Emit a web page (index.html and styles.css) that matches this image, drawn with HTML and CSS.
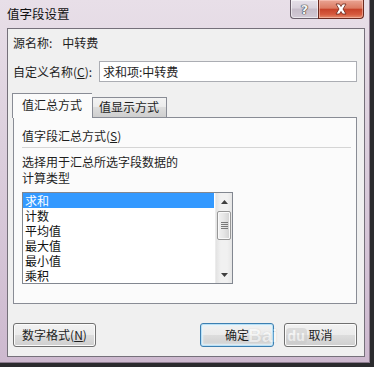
FILE: index.html
```html
<!DOCTYPE html>
<html lang="zh-CN">
<head>
<meta charset="utf-8">
<title>值字段设置</title>
<link rel="stylesheet" href="styles.css">
</head>
<body>
<div class="window">
  <div class="titlebar">
    <div class="title">值字段设置</div>
    <div class="caption">
      <div class="cap-btn help"><span class="help-glyph">?</span></div>
      <div class="cap-btn close">
        <svg width="16" height="12" viewBox="0 0 16 12"><path d="M3 1 L6.5 1 L8 3.5 L9.5 1 L13 1 L10 6 L13 11 L9.5 11 L8 8.5 L6.5 11 L3 11 L6 6 Z" fill="#fff" stroke="#6b2418" stroke-width="0.8"/></svg>
      </div>
    </div>
  </div>
  <div class="client">
    <div class="row row-source">
      <span class="lbl">源名称:</span><span class="val">中转费</span>
    </div>
    <div class="row row-custom">
      <span class="lbl">自定义名称(<u>C</u>):</span>
      <div class="input">求和项:中转费</div>
    </div>
    <div class="tabs">
      <div class="tab active">值汇总方式</div>
      <div class="tab second">值显示方式</div>
    </div>
    <div class="panel">
      <div class="group-title">值字段汇总方式(<u>S</u>)</div>
      <div class="sep"></div>
      <div class="desc">选择用于汇总所选字段数据的<br>计算类型</div>
      <div class="listbox">
        <div class="items">
          <div class="item selected">求和</div>
          <div class="item">计数</div>
          <div class="item">平均值</div>
          <div class="item">最大值</div>
          <div class="item">最小值</div>
          <div class="item">乘积</div>
        </div>
        <div class="scrollbar">
          <div class="arrow up"><svg width="7" height="4" viewBox="0 0 7 4"><path d="M0 4 L3.5 0 L7 4 Z" fill="#404040"/></svg></div>
          <div class="thumb"><span class="grip"></span></div>
          <div class="track"></div>
          <div class="arrow down"><svg width="7" height="4" viewBox="0 0 7 4"><path d="M0 0 L7 0 L3.5 4 Z" fill="#404040"/></svg></div>
        </div>
      </div>
    </div>
    <div class="buttons">
      <div class="btn fmt">数字格式(<u>N</u>)</div>
      <div class="spacer"></div>
      <div class="btn ok">确定</div>
      <div class="btn cancel">取消</div>
    </div>
    <div class="watermark">
      <span class="wm-bai">Bai</span><span class="wm-du">du</span>
    </div>
  </div>
</div>
</body>
</html>
```

FILE: styles.css
```css
* { box-sizing: border-box; }
html, body { margin: 0; padding: 0; }
body {
  width: 374px;
  height: 367px;
  background: #2b2b2e;
  font-family: "Noto Sans CJK SC", "Microsoft YaHei", sans-serif;
  font-size: 12px;
  color: #1e1e1e;
  overflow: hidden;
}
u { text-decoration: underline; text-underline-offset: 1px; }

.window {
  width: 370px;
  height: 363px;
  display: flex;
  flex-direction: column;
  background: linear-gradient(180deg, #e8dfe8 0%, #dccfdd 40%, #cdb9cf 100%);
  border-right: 1px solid #8c7b8e;
  border-bottom: 1px solid #8c7b8e;
}

.titlebar {
  height: 28px;
  display: flex;
  align-items: flex-start;
  padding-left: 7px;
}
.title {
  padding-top: 7px;
  line-height: 14px;
  font-size: 12.5px;
  color: #111;
}
.caption {
  margin-left: auto;
  margin-right: 5px;
  display: flex;
}
.cap-btn {
  height: 19px;
  display: flex;
  align-items: center;
  justify-content: center;
  border: 1px solid #6a5f6b;
  border-top: none;
}
.help {
  width: 28px;
  border-radius: 0 0 0 4px;
  border-right: none;
  background: linear-gradient(180deg, #e6e0e8 0%, #d9d2dc 45%, #c6bcc9 50%, #d2cad5 100%);
  box-shadow: inset 0 0 0 1px rgba(255,255,255,0.55);
}
.help-glyph {
  font-family: "DejaVu Sans", sans-serif;
  font-weight: bold;
  font-size: 13px;
  line-height: 13px;
  color: #f4f4f4;
  text-shadow: 0 0 1px #333, 0 0 1px #333, 0 0 1px #333;
}
.close {
  width: 46px;
  border-radius: 0 0 4px 0;
  border-color: #6b2a20;
  background: linear-gradient(180deg, #e9a493 0%, #dc7b63 45%, #c7432a 52%, #d65a3e 80%, #e48f6f 100%);
  box-shadow: inset 0 0 0 1px rgba(255,210,200,0.5);
}

.client {
  position: relative;
  flex: 1;
  margin: 0 4px 5px 7px;
  background: #f0f0f0;
  border: 1px solid #75707a;
  padding: 0 7px 0 5px;
  display: flex;
  flex-direction: column;
}

.row { display: flex; align-items: center; }
.row-source { margin-top: 6px; height: 16px; line-height: 16px; }
.row-source .val { margin-left: 10px; }
.row-custom { margin-top: 10px; height: 21px; }
.input {
  margin-left: auto;
  width: 258px;
  height: 21px;
  border: 1px solid #abadb3;
  background: #fff;
  line-height: 19px;
  padding-left: 3px;
}

.tabs {
  margin-top: 11px;
  height: 24px;
  display: flex;
  align-items: flex-end;
  margin-left: -1px;
}
.tab {
  height: 20px;
  line-height: 18px;
  white-space: nowrap;
  border: 1px solid #898c95;
  border-bottom: none;
  background: linear-gradient(180deg, #f3f3f3 0%, #ebebeb 50%, #dddddd 50%, #cfcfcf 100%);
}
.tab.active {
  height: 25px;
  width: 80px;
  background: #fbfbfb;
  line-height: 22px;
  padding-left: 9px;
  margin-bottom: -1px;
  position: relative;
  z-index: 1;
  border-right: none;
}
.tab.second { padding: 0 7px 0 6px; }

.panel {
  height: 187px;
  border: 1px solid #898c95;
  background: #fbfbfb;
  padding: 10px 5px 0 8px;
  display: flex;
  flex-direction: column;
}
.group-title { line-height: 16px; }
.sep {
  margin-top: 3px;
  height: 1px;
  background: #d5d5d5;
}
.desc { margin-top: 6px; line-height: 16px; }

.listbox {
  margin-top: 6px;
  width: 211px;
  height: 92px;
  border: 1px solid #828790;
  background: #fff;
  display: flex;
}
.items {
  flex: 1;
  overflow: hidden;
  padding: 0 1px 0 0;
}
.item {
  height: 15px;
  line-height: 15px;
  padding-left: 2px;
  font-size: 12px;
  color: #111;
}
.item.selected {
  background: #3399ff;
  color: #fff;
}
.scrollbar {
  width: 17px;
  display: flex;
  flex-direction: column;
  background: linear-gradient(90deg, #e3e3e3 0%, #f1f1f1 30%, #f1f1f1 70%, #e6e6e6 100%);
  border-left: 1px solid #ececec;
}
.arrow {
  height: 17px;
  display: flex;
  align-items: center;
  justify-content: center;
}
.thumb {
  height: 29px;
  margin: 1px 1px 0 1px;
  border: 1px solid #979797;
  border-radius: 2px;
  background: linear-gradient(90deg, #f2f2f2 0%, #e6e6e6 50%, #d2d2d2 100%);
  box-shadow: inset 0 0 0 1px #fafafa;
  display: flex;
  align-items: center;
  justify-content: center;
}
.grip {
  width: 7px;
  height: 8px;
  background: repeating-linear-gradient(180deg, #5e5e5e 0 1px, transparent 1px 2px);
  opacity: 0.8;
}
.track { flex: 1; }

.buttons {
  margin-top: 19px;
  height: 24px;
  display: flex;
}
.spacer { flex: 1; }
.btn {
  height: 24px;
  border: 1px solid #707070;
  border-radius: 3px;
  background: linear-gradient(180deg, #f2f2f2 0%, #ebebeb 49%, #dddddd 50%, #cfcfcf 100%);
  box-shadow: inset 0 0 0 1px #fbfbfb;
  display: flex;
  align-items: center;
  justify-content: center;
  line-height: 16px;
}
.btn.fmt { width: 83px; }
.btn.ok {
  width: 74px;
  border-color: #3c7fb1;
  box-shadow: inset 0 0 0 1px #b8e0f6, inset 0 0 2px 2px #e4f3fb;
}
.btn.cancel { width: 73px; margin-left: 10px; }

.watermark {
  position: absolute;
  left: 240px;
  top: 292px;
  height: 30px;
  display: flex;
  align-items: center;
  pointer-events: none;
  opacity: 0.5;
}
.wm-bai {
  font-family: "Liberation Sans", sans-serif;
  font-size: 19px;
  font-weight: bold;
  color: #fff;
  text-shadow: 0 0 1px #9a9a9a;
}
.wm-du {
  margin-left: 8px;
  padding: 0 2px;
  font-family: "Liberation Sans", sans-serif;
  font-size: 14px;
  font-weight: bold;
  color: #fff;
  background: #c9c9c9;
  border-radius: 4px;
}
```
